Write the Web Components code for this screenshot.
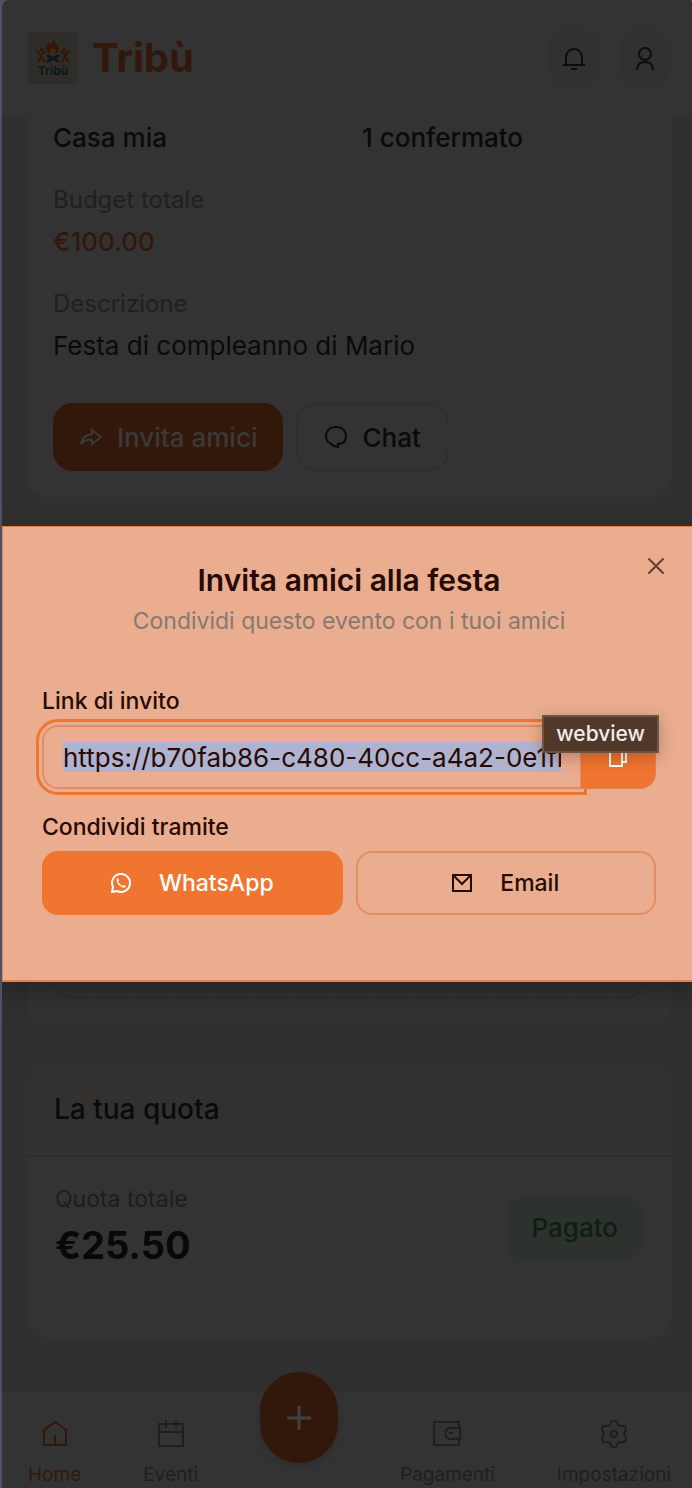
<!DOCTYPE html>
<html lang="it">
<head>
<meta charset="utf-8">
<meta name="viewport" content="width=device-width, initial-scale=1">
<title>Tribù</title>
<style>
html { background: #4d5366; }
body { margin: 0; font-family: Inter, "Liberation Sans", sans-serif; color: #0a0a0a; }
</style>
</head>
<body>
<tribu-app></tribu-app>
<script>
const define = (name, markup) => {
  const template = document.createElement('template');
  template.innerHTML = '<style>*{box-sizing:border-box}button{font:inherit;cursor:pointer}svg{display:block;flex:none}</style>' + markup;
  customElements.define(name, class extends HTMLElement {
    constructor() {
      super();
      this.attachShadow({ mode: 'open' }).append(template.content.cloneNode(true));
    }
  });
};

define('tribu-logo', `
<style>
:host { display: flex; align-items: center; gap: 14px; color: #32180b; }
strong { font-size: 40px; line-height: 52px; font-weight: 700; }
</style>
<svg width="50" height="52" viewBox="0 0 50 52" role="img" aria-label="Logo Tribù">
  <rect width="50" height="52" fill="#2f2d2a"/>
  <path d="M25 7c1 4 6 6 6 10 0 3-3 5-6 5s-7-2-7-6c0-2 1-4 3-6l1 3c2-1 3-3 3-6z" fill="#351708"/>
  <path d="M25 14c0 3 3 3 3 5s-1 3-3 3-3-1-3-3 2-2 3-5z" fill="#3d2b10"/>
  <g fill="#351708"><circle cx="14" cy="18" r="2"/><circle cx="36" cy="18" r="2"/></g>
  <g fill="none" stroke="#351708" stroke-width="2" stroke-linecap="round" stroke-linejoin="round">
    <path d="M9 19l3 4 5-3M13 22v3l-3 5M14 25l2 5M41 19l-3 4-5-3M37 22v3l3 5M36 25l-2 5"/>
  </g>
  <path d="M20 24l10 5M30 24l-10 5" stroke="#0d171b" stroke-width="3" stroke-linecap="round"/>
  <text x="25" y="43" text-anchor="middle" font-family="Inter, sans-serif" font-size="12" font-weight="700" fill="#0d171b">Tribù</text>
</svg>
<strong>Tribù</strong>`);

define('round-button', `
<style>
:host { display: block; }
button { display: grid; place-items: center; width: 52px; height: 64px; padding: 0; border: 0; border-radius: 26px; background: #313131; color: #0d0d0d; }
</style>
<button type="button" aria-label="Azione rapida"><slot></slot></button>`);

define('tribu-header', `
<style>
:host { display: block; background: #333; border-bottom: 1px solid #303030; }
header { display: flex; align-items: center; justify-content: space-between; height: 116px; padding: 0 21px 0 26px; }
nav { display: flex; gap: 19px; }
</style>
<header>
  <tribu-logo></tribu-logo>
  <nav aria-label="Account">
    <round-button><svg width="24" height="26" viewBox="0 0 24 26" fill="none" stroke="currentColor" stroke-width="2"><path d="M1 20h22M4 20v-8a8 8 0 0 1 16 0v8M9 24h6"/></svg></round-button>
    <round-button><svg width="20" height="26" viewBox="0 0 20 26" fill="none" stroke="currentColor" stroke-width="2"><circle cx="10" cy="9" r="6"/><path d="M2 25c0-5 3-8 8-8s8 3 8 8"/></svg></round-button>
  </nav>
</header>`);

define('tribu-card', `
<style>
:host { display: block; background: #333; border-radius: 20px; box-shadow: 0 0 0 1px #313131; overflow: hidden; }
::slotted([slot=header]) { display: block; padding: 25px 26px 26px; background: #33312f; border-bottom: 2px solid #2e2c2a; margin: 0; font-size: 28px; line-height: 40px; font-weight: 500; }
</style>
<slot name="header"></slot><slot></slot>`);

define('info-item', `
<style>
:host { display: grid; gap: 10px; line-height: 32px; font-size: 26px; }
::slotted([slot=label]) { font-size: 24px; color: #202020; }
</style>
<slot name="label"></slot><slot></slot>`);

define('card-action', `
<style>
:host { display: block; }
button { display: flex; align-items: center; gap: 14px; height: 68px; padding: 0 26px; border: 2px solid #2f2f2f; border-radius: 20px; background: #333; color: #0a0a0a; font-size: 26px; font-weight: 500; }
:host([primary]) button { background: #32180b; border-color: #32180b; color: #3a3a3a; padding: 0 24px; }
</style>
<button type="button"><slot name="icon"></slot><slot></slot></button>`);

define('event-details', `
<style>
:host { display: block; }
section { display: grid; gap: 30px; padding: 5px 25px 26px; }
.facts { display: grid; grid-template-columns: 1fr 1fr; gap: 25px; font-size: 26px; line-height: 32px; font-weight: 500; }
.money { color: #32180b; font-weight: 500; }
.actions { display: flex; gap: 13px; margin-top: 11px; }
</style>
<section>
  <div class="facts"><span>Casa mia</span><span>1 confermato</span></div>
  <info-item><span slot="label">Budget totale</span><span class="money">€100.00</span></info-item>
  <info-item><span slot="label">Descrizione</span><span>Festa di compleanno di Mario</span></info-item>
  <div class="actions">
    <card-action primary><svg slot="icon" width="24" height="20" viewBox="0 0 24 20" fill="none" stroke="currentColor" stroke-width="2"><path d="M13 3l9 7-9 7v-4c-5-1-8 0-11 4 1-6 5-9 11-10z"/></svg>Invita amici</card-action>
    <card-action><svg slot="icon" width="24" height="24" viewBox="0 0 24 24" fill="none" stroke="currentColor" stroke-width="2"><path d="M14 19v3c-3 0-6-2-8-4-3-1-4-4-4-7 0-5 4-9 9-9h2c5 0 9 4 9 9s-3 8-8 8z"/></svg>Chat</card-action>
  </div>
</section>`);

define('expense-list', `
<style>
:host { display: block; padding: 26px 25px; }
div { min-height: 435px; border: 1px dashed #272727; border-radius: 20px; }
</style>
<div></div>`);

define('quota-summary', `
<style>
:host { display: flex; justify-content: space-between; align-items: flex-start; padding: 25px 28px 63px 27px; }
.figures { display: grid; line-height: 34px; font-size: 23px; color: #1e1e1e; }
b { font-size: 38px; line-height: 59px; color: #080808; }
.badge { margin-top: 14px; padding: 0 25px; line-height: 64px; border-radius: 20px; background: #2d322f; color: #0c2010; font-size: 26px; font-weight: 500; }
</style>
<div class="figures"><span>Quota totale</span><b>€25.50</b></div>
<span class="badge">Pagato</span>`);

define('share-button', `
<style>
:host { display: block; }
button { display: flex; align-items: center; justify-content: center; gap: 28px; width: 100%; height: 64px; border: 2px solid #e28e64; border-radius: 16px; background: transparent; color: #260a04; font-size: 23px; font-weight: 500; }
:host([primary]) button { background: #ef7530; border-color: #ef7530; color: #fff; }
</style>
<button type="button"><slot name="icon"></slot><slot></slot></button>`);

define('invite-link', `
<style>
:host { display: flex; position: relative; }
input { flex: 1; min-width: 0; height: 64px; padding: 15px 19px; border: 2px solid #e28e64; border-right-width: 1px; border-radius: 16px 0 0 16px; outline: 3px solid #ef7530; outline-offset: 3px; background: #b0b3cf content-box; color: #260a04; font: 26px/32px Inter, "Liberation Sans", sans-serif; }
button { position: relative; display: grid; place-items: center; width: 75px; height: 64px; padding: 0; border: 1px solid #df8354; border-left: 0; border-radius: 0 16px 16px 0; background: #ef7530; color: #fff; }
.tip { position: absolute; top: -10px; right: -3px; padding: 0 12px; border: 2px solid #6c5444; background: #523828; color: #eee; font-size: 21px; line-height: 34px; font-weight: 500; box-shadow: 0 4px 16px rgba(80, 40, 20, .35); }
</style>
<input id="link" type="text" readonly aria-label="Link di invito" value="https://b70fab86-c480-40cc-a4a2-0e1fb3d7c6a9">
<button type="button" aria-label="Copia link"><svg width="20" height="20" viewBox="0 0 20 20" fill="none" stroke="currentColor" stroke-width="2"><path d="M2 5h12v14H2zM6 1h12v14h-4"/></svg></button>
<span class="tip" role="tooltip">webview</span>`);

define('invite-dialog', `
<style>
:host { display: block; border: 1px solid #e58150; border-right: 0; border-bottom-width: 2px; background: #eaad90; color: #260a04; box-shadow: 0 10px 26px rgba(0, 0, 0, .3); }
section { display: grid; position: relative; padding: 33px 36px 65px 39px; }
h2 { margin: 0; font-size: 30px; line-height: 40px; font-weight: 600; text-align: center; }
p { margin: 5px 0 48px; font-size: 23px; line-height: 32px; text-align: center; color: #857970; }
h3 { margin: 0 0 8px; font-size: 23px; line-height: 32px; font-weight: 500; }
invite-link { margin-bottom: 22px; }
.share { display: grid; grid-template-columns: 1fr 1fr; gap: 13px; }
.close { position: absolute; top: 23px; right: 28px; padding: 0; border: 0; background: none; color: #6b3c2c; }
</style>
<section role="dialog" aria-labelledby="title">
  <h2 id="title">Invita amici alla festa</h2>
  <p>Condividi questo evento con i tuoi amici</p>
  <h3>Link di invito</h3>
  <invite-link></invite-link>
  <h3>Condividi tramite</h3>
  <div class="share">
    <share-button primary><svg slot="icon" width="20" height="20" viewBox="0 0 20 20" fill="none" stroke="currentColor" stroke-width="2"><path d="M1 19l1-5a9 9 0 1 1 4 4z"/><path d="M7 5c-2 1-2 4 1 7s6 4 7 1l-3-1-1 1-4-4 1-1z" fill="currentColor" stroke="none"/></svg>WhatsApp</share-button>
    <share-button><svg slot="icon" width="20" height="18" viewBox="0 0 20 18" fill="none" stroke="currentColor" stroke-width="2"><path d="M1 1h18v16H1zM2 2l8 8 8-8"/></svg>Email</share-button>
  </div>
  <button class="close" type="button" aria-label="Chiudi"><svg width="16" height="32" viewBox="0 0 16 32" fill="none" stroke="currentColor" stroke-width="2" stroke-linecap="round"><path d="M1 9l14 14M15 9L1 23"/></svg></button>
</section>`);

define('nav-item', `
<style>
:host { display: block; }
a { display: grid; justify-items: center; gap: 15px; color: #1f1f1f; text-decoration: none; font-size: 19px; line-height: 24px; }
:host([active]) a { color: #32180b; }
</style>
<a href="#"><slot name="icon"></slot><slot></slot></a>`);

define('tribu-tabs', `
<style>
:host { display: block; background: #333; border-top: 1px solid #303030; }
nav { display: flex; justify-content: space-between; align-items: flex-start; height: 96px; padding: 28px 21px 0 26px; }
.add { display: grid; place-items: center; width: 78px; height: 91px; margin-top: -48px; padding: 0; border: 0; border-radius: 39px; background: #32180b; color: #404040; box-shadow: 0 4px 8px rgba(0, 0, 0, .12); }
</style>
<nav aria-label="Principale">
  <nav-item active><svg slot="icon" width="26" height="28" viewBox="0 0 26 28" fill="none" stroke="currentColor" stroke-width="2"><path d="M2 10l11-8 11 8v15H2zM13 25V15"/></svg>Home</nav-item>
  <nav-item><svg slot="icon" width="28" height="28" viewBox="0 0 28 28" fill="none" stroke="currentColor" stroke-width="2"><path d="M2 4h24v22H2zM2 12h24M9 0v8M19 0v8"/></svg>Eventi</nav-item>
  <button class="add" type="button" aria-label="Aggiungi"><svg width="24" height="24" viewBox="0 0 24 24" stroke="currentColor" stroke-width="3"><path d="M12 0v24M0 12h24"/></svg></button>
  <nav-item><svg slot="icon" width="30" height="28" viewBox="0 0 30 28" fill="none" stroke="currentColor" stroke-width="2"><path d="M27 8V2H2v23h25v-6M28 8H17a6 6 0 0 0 0 11h11zM17 13h4"/></svg>Pagamenti</nav-item>
  <nav-item><svg slot="icon" width="28" height="28" viewBox="0 0 28 28" fill="none" stroke="currentColor" stroke-width="2" stroke-linejoin="round"><path d="M12 1h4l2 4 3 1 4 0 1 4-2 4 2 4-1 4-4 0-3 1-2 4h-4l-2-4-3-1-4 0-1-4 2-4-2-4 1-4 4 0 3-1z"/><circle cx="14" cy="14" r="3"/></svg>Impostazioni</nav-item>
</nav>`);

define('tribu-app', `
<style>
:host { display: block; padding-left: 2px; }
.frame { display: flex; flex-direction: column; min-height: 100vh; background: #303030; border-radius: 8px 4px 0 0; overflow: hidden; }
main { display: grid; gap: 40px; position: relative; flex: 1; align-content: start; padding: 0 21px 53px 26px; }
.first { border-radius: 0 0 20px 20px; }
invite-dialog { position: absolute; left: 0; right: 0; top: 50%; transform: translateY(-50%); }
</style>
<div class="frame">
  <tribu-header></tribu-header>
  <main>
    <tribu-card class="first"><event-details></event-details></tribu-card>
    <tribu-card><expense-list></expense-list></tribu-card>
    <tribu-card><h2 slot="header">La tua quota</h2><quota-summary></quota-summary></tribu-card>
    <invite-dialog></invite-dialog>
  </main>
  <tribu-tabs></tribu-tabs>
</div>`);
</script>
</body>
</html>
